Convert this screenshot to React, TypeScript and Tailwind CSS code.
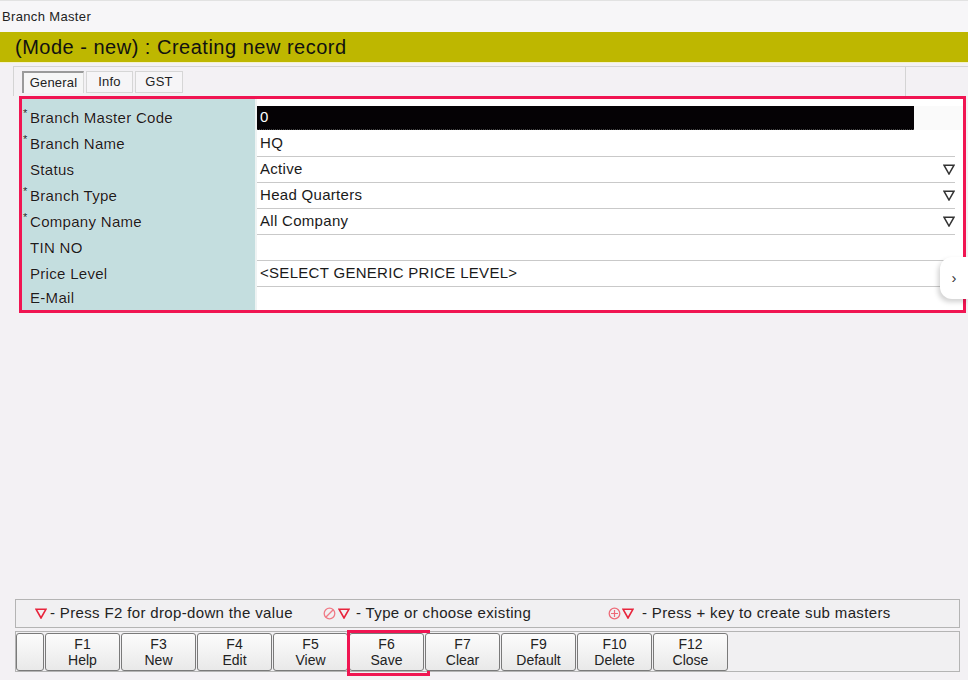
import React from "react";

const Tri = ({ color, w = 12, h = 11, sw = 1.6 }: { color: string; w?: number; h?: number; sw?: number }) => (
  <svg width={w} height={h} viewBox="0 0 12 11" className="shrink-0">
    <path d="M1 1.2 H11 L6 10 Z" fill="none" stroke={color} strokeWidth={sw} strokeLinejoin="miter" />
  </svg>
);

const NoIcon = () => (
  <svg width="13" height="13" viewBox="0 0 13 13" className="shrink-0">
    <circle cx="6.5" cy="6.5" r="5.3" fill="none" stroke="#f07a86" strokeWidth="1.3" />
    <path d="M2.8 10.2 L10.2 2.8" stroke="#f07a86" strokeWidth="1.3" />
  </svg>
);

const PlusIcon = () => (
  <svg width="13" height="13" viewBox="0 0 13 13" className="shrink-0">
    <circle cx="6.5" cy="6.5" r="5.3" fill="none" stroke="#ee6a78" strokeWidth="1.3" />
    <path d="M6.5 3 V10 M3 6.5 H10" stroke="#ee6a78" strokeWidth="1.2" />
  </svg>
);

type RowDef = { label: string; req?: boolean; value?: string; kind: "black" | "text" | "drop" };

const rows: RowDef[] = [
  { label: "Branch Master Code", req: true, value: "0", kind: "black" },
  { label: "Branch Name", req: true, value: "HQ", kind: "text" },
  { label: "Status", value: "Active", kind: "drop" },
  { label: "Branch Type", req: true, value: "Head Quarters", kind: "drop" },
  { label: "Company Name", req: true, value: "All Company", kind: "drop" },
  { label: "TIN NO", value: "", kind: "text" },
  { label: "Price Level", value: "<SELECT GENERIC PRICE LEVEL>", kind: "text" },
  { label: "E-Mail", value: "", kind: "text" },
];

const buttons = [
  ["F1", "Help"],
  ["F3", "New"],
  ["F4", "Edit"],
  ["F5", "View"],
  ["F6", "Save"],
  ["F7", "Clear"],
  ["F9", "Default"],
  ["F10", "Delete"],
  ["F12", "Close"],
];

function ValueCell({ r, i }: { r: RowDef; i: number }) {
  const last = i === rows.length - 1;
  if (r.kind === "black") {
    return (
      <div className="h-[26px] flex items-center">
        <div className="w-[657px] h-[24px] bg-[#050205] text-white text-[15px] tracking-[0.3px] pl-[3px] flex items-center border-b border-dotted border-[#444]">
          {r.value}
        </div>
        <div className="flex-1 h-[24px] bg-[#fafafa]" />
      </div>
    );
  }
  return (
    <div className={`${last ? "h-[22px]" : "h-[26px]"} flex`}>
      <div
        className={`w-[698px] bg-white flex items-center pl-[3px] text-[15px] tracking-[0.3px] text-[#1a1a1a] ${
          last ? "" : "border-b border-[#c9c9c9]"
        }`}
      >
        <span className="flex-1">{r.value}</span>
        {r.kind === "drop" && (
          <span className="ml-auto">
            <Tri color="#333" w={12} h={11} sw={1.5} />
          </span>
        )}
      </div>
      <div className="flex-1 bg-white" />
    </div>
  );
}

export default function App() {
  return (
    <div className="w-[968px] h-[680px] bg-[#f3f1f4] flex flex-col overflow-hidden font-['Liberation_Sans',Arial,sans-serif] text-[#1a1a1a]">
      {/* Title */}
      <div className="h-[32px] bg-[#f7f6f8] border-t border-[#e2e2e2] flex items-center pl-[2px] text-[13px] tracking-[0.35px] text-[#222]">
        Branch Master
      </div>
      {/* Mode bar */}
      <div className="h-[31px] bg-[#beb700] flex items-center pl-[15px] text-[20px] tracking-[0.5px] text-[#111] border-b border-[#f4f2c8]">
        (Mode - new) : Creating new record
      </div>
      <div className="h-[3px]" />
      {/* Tab strip */}
      <div className="flex h-[30px]">
        <div className="ml-[13px] w-[893px] border-t border-l border-r border-[#d4d4d4] flex items-start pt-[4px] pl-[8px] gap-[2px]">
          <div className="h-[22px] w-[62px] border-l-2 border-t-2 border-[#9a9a9a] border-r border-r-[#d8d8d8] bg-[#f6f6f6] flex items-center justify-center text-[13px] tracking-[0.2px] text-[#222]">
            General
          </div>
          <div className="h-[22px] w-[47px] border border-[#d6d6d6] bg-[#f6f5f7] flex items-center justify-center text-[13px] tracking-[0.2px] text-[#222]">
            Info
          </div>
          <div className="h-[22px] w-[48px] border border-[#d6d6d6] bg-[#f6f5f7] flex items-center justify-center text-[13px] tracking-[0.2px] text-[#222]">
            GST
          </div>
        </div>
        <div className="flex-1 border-t border-[#d4d4d4]" />
      </div>
      {/* Red frame */}
      <div className="ml-[19px] w-[947px] h-[217px] border-[3px] border-[#f01552] relative flex bg-[#f6f6f6]">
        <div className="w-[233px] bg-[#c4dedf] pt-[6px] overflow-hidden">
          {rows.map((r, i) => (
            <div
              key={r.label}
              className={`${i === rows.length - 1 ? "h-[22px]" : "h-[26px]"} relative flex items-center pl-[8px] text-[15px] tracking-[0.3px] text-[#1c1c1c] [text-shadow:0_0_1px_#ffffff]`}
            >
              {r.req && <span className="absolute left-[1px] top-[3px] text-[11px] leading-none">*</span>}
              {r.label}
            </div>
          ))}
        </div>
        <div className="w-[2px] bg-[#eef3f3]" />
        <div className="flex-1 pt-[6px] bg-white overflow-hidden">
          {rows.map((r, i) => (
            <ValueCell key={r.label} r={r} i={i} />
          ))}
        </div>
        {/* floating side tab */}
        <div className="absolute left-[918px] top-[158px] w-[28px] h-[42px] bg-white rounded-l-[12px] shadow-[-2px_3px_5px_rgba(0,0,0,0.18)] flex items-center justify-center text-[15px] text-[#333]">
          ›
        </div>
      </div>

      {/* Bottom */}
      <div className="mt-auto mb-[8px]">
        <div className="ml-[15px] w-[945px] h-[29px] border border-[#b4b4b4] bg-[#f1f0f2] flex items-center text-[15px] tracking-[0.35px] text-[#222]">
          <div className="w-[307px] pl-[19px] flex items-center gap-[3px]">
            <Tri color="#e8243c" />
            <span>- Press F2 for drop-down the value</span>
          </div>
          <div className="w-[285px] flex items-center">
            <NoIcon />
            <span className="ml-[2px] flex"><Tri color="#e8243c" /></span>
            <span className="ml-[6px]">- Type or choose existing</span>
          </div>
          <div className="flex items-center">
            <PlusIcon />
            <span className="ml-[1px] flex"><Tri color="#e8243c" /></span>
            <span className="ml-[8px]">- Press + key to create sub masters</span>
          </div>
        </div>
        <div className="mt-[3px] ml-[15px] w-[945px] h-[41px] border border-[#b4b4b4] bg-[#f1f0f2] flex items-center gap-[1px]">
          <div className="w-[28px] h-[38px] rounded-[3px] border border-[#7a7a7a] bg-linear-to-b from-[#fcfcfc] to-[#e9e9e9]" />
          {buttons.map(([k, l]) => (
            <div key={k} className="relative">
              <div className="w-[75px] h-[38px] rounded-[3px] border border-[#7a7a7a] bg-linear-to-b from-[#fcfcfc] to-[#e9e9e9] flex flex-col items-center justify-center text-[14px] leading-[16px] text-[#222]">
                <span>{k}</span>
                <span>{l}</span>
              </div>
              {k === "F6" && (
                <div className="absolute -left-[2px] -top-[3px] w-[83px] h-[46px] border-[3px] border-[#f01552] pointer-events-none" />
              )}
            </div>
          ))}
        </div>
      </div>
    </div>
  );
}
